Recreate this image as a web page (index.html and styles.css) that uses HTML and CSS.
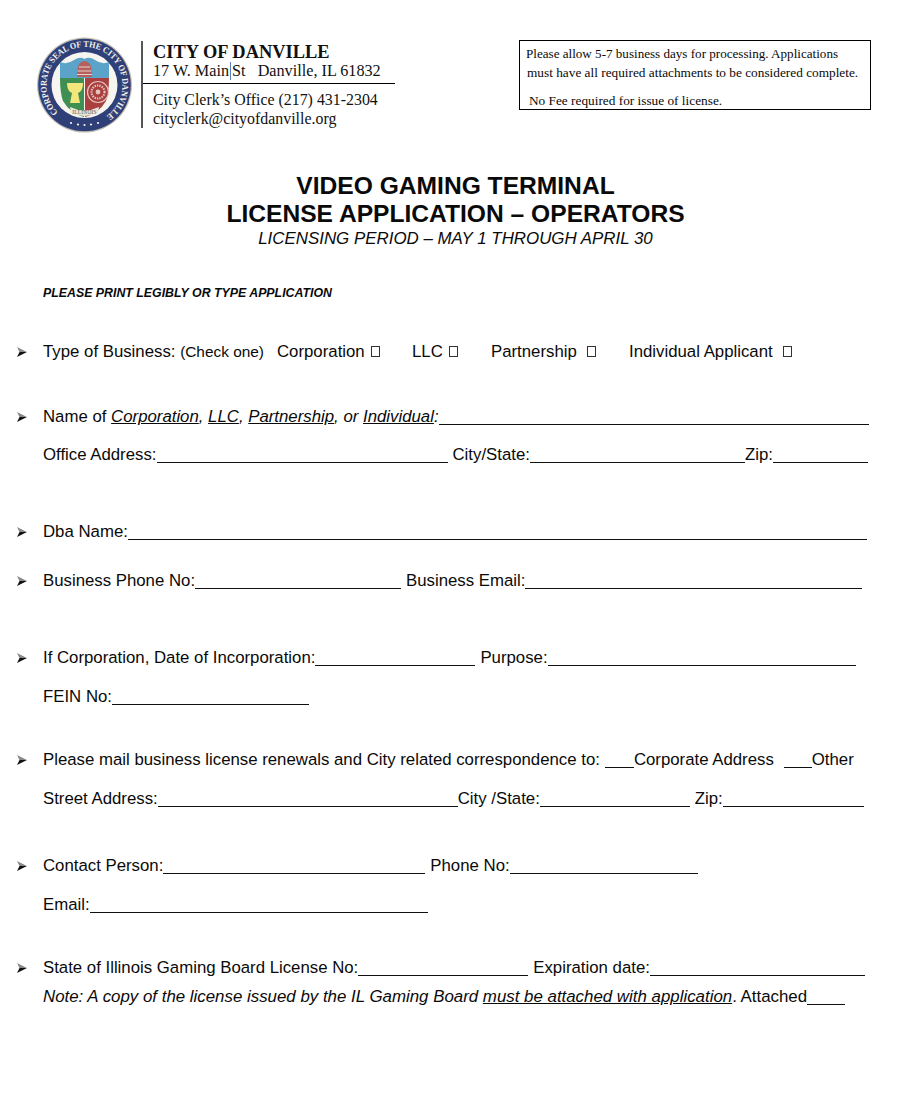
FILE: index.html
```html
<!DOCTYPE html>
<html lang="en">
<head>
<meta charset="utf-8">
<title>Video Gaming Terminal License Application</title>
<link rel="stylesheet" href="styles.css">
</head>
<body>
<main class="page">
  <header class="letterhead">
    <svg class="seal" viewBox="0 0 96 96" role="img" aria-label="Corporate seal of the City of Danville">
      <defs>
        <path id="sealRing" d="M 21.1 75.3 A 38 38 0 1 1 68.7 79.5"/>
      </defs>
      <circle cx="47.5" cy="48" r="47.5" fill="#c4bfb3"/>
      <circle cx="47.5" cy="48" r="46.3" fill="#2f4079"/>
      <circle cx="47.5" cy="48" r="33" fill="#f6f5ef"/>
      <text class="seal-ring"><textPath href="#sealRing" textLength="186" lengthAdjust="spacingAndGlyphs">CORPORATE SEAL OF THE CITY OF DANVILLE</textPath></text>
      <path d="M23 25 Q30 28 37 23 Q43 19 47.5 22 Q52 19 58 23 Q65 28 72 25 L72 41 L23 41 Z" fill="#5ba3c9"/>
      <path d="M23 41 L47 41 L47 80 Q33 76 26 64 Q23 56 23 41 Z" fill="#3f8e52"/>
      <path d="M48 41 L72 41 Q72 56 69 64 Q62 76 48 80 Z" fill="#a9403f"/>
      <path d="M40 40 L40 35 Q41 24 47.5 24 Q54 24 55 35 L55 40 Z" fill="#b5605c"/>
      <path d="M42 30 H53 M40.5 34 H54.5 M40 37.5 H55" stroke="#e6d3cb" stroke-width="1"/>
      <path d="M30 46 H46 Q46 54 41 56 L43 66 H33 L35 56 Q30 54 30 46 Z" fill="#f3e77c"/>
      <circle cx="61" cy="55" r="10.5" fill="#a9403f" stroke="#e4c5bf" stroke-width="1.2"/>
      <circle cx="61" cy="55" r="6.5" fill="none" stroke="#e4c5bf" stroke-width="2.2" stroke-dasharray="1.4 1"/>
      <circle cx="61" cy="55" r="2.4" fill="#e4c5bf"/>
      <path d="M33 70 Q47.5 77 62 70 L61 76 Q47.5 82 34 76 Z" fill="#ece8d8"/>
      <text class="seal-state" x="47.5" y="76.5" text-anchor="middle">ILLINOIS</text>
      <g fill="#f6f5ef">
        <circle cx="34" cy="86" r="1.1"/><circle cx="41" cy="87.5" r="1.1"/><circle cx="47.5" cy="88" r="1.1"/><circle cx="54" cy="87.5" r="1.1"/><circle cx="61" cy="86" r="1.1"/>
      </g>
    </svg>
    <div class="contact">
      <div class="contact-top">
        <div class="city">CITY OF DANVILLE</div>
        <div class="contact-line addr">17 W. Main<span class="cursor">St</span>&nbsp;&nbsp; Danville, IL 61832</div>
      </div>
      <div class="contact-bottom">
        <div class="contact-line">City Clerk’s Office (217) 431-2304</div>
        <div class="contact-line">cityclerk@cityofdanville.org</div>
      </div>
    </div>
    <aside class="notice">
      <p class="n1">Please allow 5-7 business days for processing. Applications</p>
      <p class="n2">must have all required attachments to be considered complete.</p>
      <p class="n3">No Fee required for issue of license.</p>
    </aside>
  </header>

  <section class="title">
    <h1>VIDEO GAMING TERMINAL<br>LICENSE APPLICATION – OPERATORS</h1>
    <p class="period">LICENSING PERIOD – MAY 1 THROUGH APRIL 30</p>
  </section>

  <p class="instruction">PLEASE PRINT LEGIBLY OR TYPE APPLICATION</p>

  <form class="form">
    <div class="row item">
      <span class="type">Type of Business: <small class="hint">(Check one)</small></span>
      <span class="opt o1">Corporation <i class="box"></i></span>
      <span class="opt o2">LLC <i class="box"></i></span>
      <span class="opt o3">Partnership <i class="box b2"></i></span>
      <span class="opt o4">Individual Applicant <i class="box b2"></i></span>
    </div>

    <div class="row item g65">
      <span>Name of <em><span class="u">Corporation</span>, <span class="u">LLC</span>, <span class="u">Partnership</span>, or <span class="u">Individual</span>:</em></span>
      <span class="blank w430"></span>
    </div>
    <div class="row g38">
      <span>Office Address:</span><span class="blank w291"></span>
      <span class="sp">City/State:</span><span class="blank w215"></span>
      <span>Zip:</span><span class="blank w95"></span>
    </div>

    <div class="row item g77">
      <span>Dba Name:</span><span class="blank w739"></span>
    </div>
    <div class="row item g49">
      <span>Business Phone No:</span><span class="blank w206"></span>
      <span class="sp">Business Email:</span><span class="blank w337"></span>
    </div>

    <div class="row item g77">
      <span>If Corporation, Date of Incorporation:</span><span class="blank w160"></span>
      <span class="sp">Purpose:</span><span class="blank w308"></span>
    </div>
    <div class="row g39">
      <span>FEIN No:</span><span class="blank w197"></span>
    </div>

    <div class="row item g63">
      <span>Please mail business license renewals and City related correspondence to:</span>
      <span class="blank w29 sp"></span><span>Corporate Address</span>
      <span class="blank w28 sp2"></span><span>Other</span>
    </div>
    <div class="row g39">
      <span>Street Address:</span><span class="blank w300"></span>
      <span>City /State:</span><span class="blank w150"></span>
      <span class="sp">Zip:</span><span class="blank w141"></span>
    </div>

    <div class="row item g67">
      <span>Contact Person:</span><span class="blank w262"></span>
      <span class="sp">Phone No:</span><span class="blank w188"></span>
    </div>
    <div class="row g39">
      <span>Email:</span><span class="blank w338"></span>
    </div>

    <div class="row item g63">
      <span>State of Illinois Gaming Board License No:</span><span class="blank w170"></span>
      <span class="sp">Expiration date:</span><span class="blank w215"></span>
    </div>
    <div class="row g29 note">
      <span><em>Note: A copy of the license issued by the IL Gaming Board <span class="u">must be attached with application</span></em>. Attached</span><span class="blank w38"></span>
    </div>
  </form>
</main>
</body>
</html>
```

FILE: styles.css
```css
* { box-sizing: border-box; }
html, body { margin: 0; background: #fff; }
.page {
  width: 912px;
  height: 1107px;
  padding: 37px 41px 0 37px;
  color: #0a0a0a;
  font-family: "Liberation Sans", Arial, sans-serif;
}

/* Letterhead */
.letterhead { display: flex; align-items: flex-start; height: 96px; }
.seal { width: 96px; height: 96px; flex: none; }
.seal-ring { font: bold 8.8px "Liberation Serif", serif; fill: #f4f2ea; }
.seal-state { font: 5.4px "Liberation Serif", serif; fill: #555; letter-spacing: .2px; }

.contact {
  margin: 4px 0 0 8px;
  width: 254px;
  height: 87px;
  border-left: 2px solid #555;
  font-family: "Liberation Serif", serif;
  color: #111;
}
.contact-top { height: 43px; padding: 1px 0 0 10px; border-bottom: 1px solid #000; }
.contact-bottom { padding: 6px 0 0 10px; }
.city { font-weight: bold; font-size: 18.4px; line-height: 20px; }
.contact-line { font-size: 15.9px; line-height: 19px; white-space: nowrap; }
.addr { font-size: 16.2px; }
.cursor { border-left: 1px solid #5b7fb5; margin-left: 1px; padding-left: 1px; }

.notice {
  margin: 3px 0 0 auto;
  width: 352px;
  height: 70px;
  border: 1px solid #000;
  font-family: "Liberation Serif", serif;
  font-size: 13.3px;
  line-height: 19px;
  white-space: nowrap;
}
.notice p { margin: 0; }
.n1 { padding: 3px 0 0 6px; font-size: 13.1px; }
.n2 { padding-left: 7px; }
.n3 { padding: 9px 0 0 9px; }

/* Title */
.title { margin-top: 39px; padding-left: 3px; text-align: center; }
.title h1 { margin: 0; font-size: 24.6px; line-height: 28px; font-weight: bold; }
.period { margin: 1px 0 0; font-size: 16.9px; line-height: 20px; font-style: italic; }

.instruction {
  margin: 36px 0 0 6px;
  font-size: 12.35px;
  line-height: 16px;
  font-weight: bold;
  font-style: italic;
}

/* Form rows */
.form { margin-top: 41px; }
.row {
  position: relative;
  display: flex;
  align-items: baseline;
  height: 20px;
  margin-left: 6px;
  font-size: 16.8px;
  line-height: 20px;
  white-space: nowrap;
}
.note { font-size: 16.87px; }
.item::before {
  content: "";
  position: absolute;
  left: -26px;
  top: 5px;
  width: 10px;
  height: 10px;
  background: linear-gradient(to bottom, #888 50%, #111 50%);
  clip-path: polygon(0 0, 100% 50%, 0 100%, 25% 50%);
}
.hint { font-size: 15.4px; }
.type { width: 234px; }
.opt { display: inline-flex; align-items: baseline; }
.o1 { width: 135px; }
.o2 { width: 79px; }
.o3 { width: 138px; }
.box {
  display: inline-block;
  width: 9px;
  height: 11px;
  margin-left: 6px;
  border: 1px solid #333;
}
.b2 { margin-left: 10px; }
.u { text-decoration: underline; }
.sp { margin-left: 5px; }
.sp2 { margin-left: 10px; }
.blank { display: inline-block; height: 1px; background: #111; align-self: flex-end; margin-bottom: 2px; }
.w28 { width: 28px; }
.w29 { width: 29px; }
.w38 { width: 38px; }
.w95 { width: 95px; }
.w141 { width: 141px; }
.w150 { width: 150px; }
.w160 { width: 160px; }
.w170 { width: 170px; }
.w188 { width: 188px; }
.w197 { width: 197px; }
.w206 { width: 206px; }
.w215 { width: 215px; }
.w262 { width: 262px; }
.w291 { width: 291px; }
.w300 { width: 300px; }
.w308 { width: 308px; }
.w337 { width: 337px; }
.w338 { width: 338px; }
.w430 { width: 430px; }
.w739 { width: 739px; }

.g29 { margin-top: 9px; }
.g38 { margin-top: 18px; }
.g39 { margin-top: 19px; }
.g49 { margin-top: 29px; }
.g63 { margin-top: 43px; }
.g65 { margin-top: 45px; }
.g67 { margin-top: 47px; }
.g77 { margin-top: 57px; }
```
